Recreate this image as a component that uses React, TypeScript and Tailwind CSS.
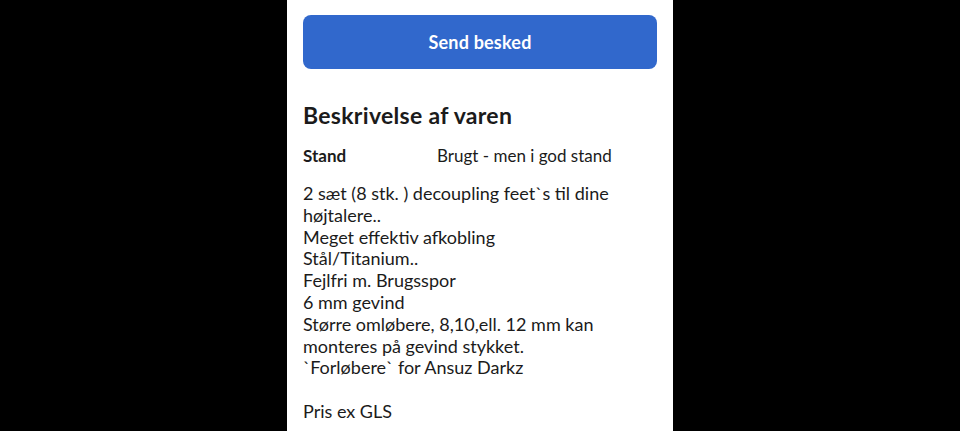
import React from "react";

const lines = [
  "2 sæt (8 stk. ) decoupling feet`s til dine højtalere..",
  "Meget effektiv afkobling",
  "Stål/Titanium..",
  "Fejlfri m. Brugsspor",
  "6 mm gevind",
  "Større omløbere, 8,10,ell. 12 mm kan monteres på gevind stykket.",
  "`Forløbere` for Ansuz Darkz",
  "",
  "Pris ex GLS",
];

export default function App() {
  return (
    <div className="w-[960px] h-[431px] bg-black flex justify-center overflow-hidden font-['Lato',sans-serif]">
      <div className="w-[386px] h-full bg-white px-4 pt-[15px] flex flex-col text-[#1b1b1b]">
        <button className="w-full h-[54px] shrink-0 rounded-lg bg-[#3168cc] text-white text-[18px] tracking-[0.2px] font-bold">
          Send besked
        </button>
        <h2 className="mt-[32px] text-[23px] tracking-[0.3px] leading-[28px] font-bold">Beskrivelse af varen</h2>
        <div className="mt-4 flex text-[17px] leading-[22px]">
          <span className="w-[134px] font-bold">Stand</span>
          <span>Brugt - men i god stand</span>
        </div>
        <div className="mt-4 text-[18px] leading-[21.8px]">
          {lines.map((l, i) => (
            <p key={i} className="min-h-[21.8px]">{l}</p>
          ))}
        </div>
      </div>
    </div>
  );
}
